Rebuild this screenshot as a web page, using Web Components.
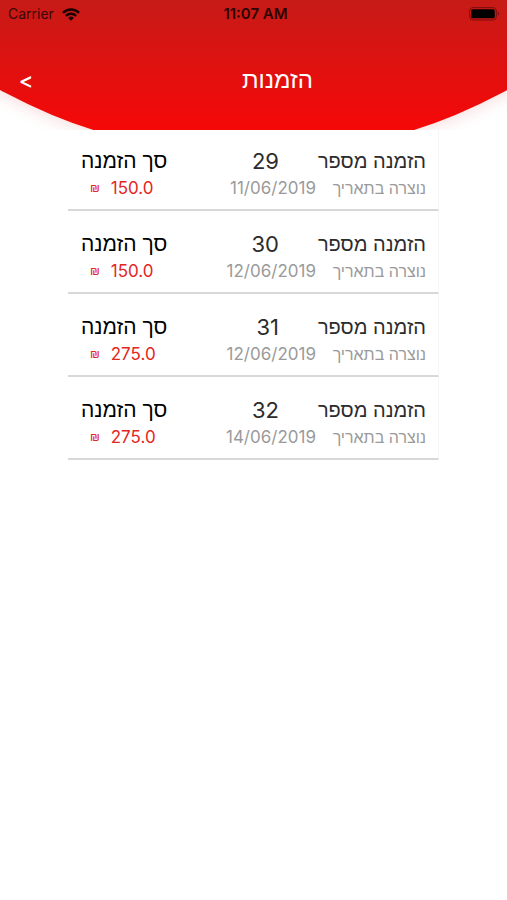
<!DOCTYPE html>
<html lang="he">
<head>
<meta charset="utf-8">
<meta name="viewport" content="width=device-width, initial-scale=1">
<title>הזמנות</title>
<style>
  body { margin: 0; background: #fff; font-family: Inter, "Liberation Sans", sans-serif; }
</style>
</head>
<body>
<orders-page></orders-page>

<template id="status-bar-template">
  <style>
    :host { display: grid; grid-template-columns: 1fr auto 1fr; align-items: center; height: 28px; padding: 0 8px; color: #3a0605; font-size: 14px; line-height: 20px; }
    .carrier { display: flex; align-items: center; gap: 8px; }
    .time { padding-left: 4px; font-size: 15px; font-weight: 600; color: #2c0403; }
    .battery { justify-self: end; display: flex; }
    svg { display: block; }
  </style>
  <span class="carrier"><span><slot name="carrier"></slot></span>
    <svg width="18" height="13" viewBox="0 0 18 13" aria-hidden="true">
      <g fill="none" stroke="#180202" stroke-width="2.4">
        <path d="M1 4.8a11.5 11.5 0 0 1 16 0"/>
        <path d="M3.9 7.9a7.3 7.3 0 0 1 10.2 0"/>
      </g>
      <path fill="#180202" d="M9 12.7 6.2 9.9a4 4 0 0 1 5.6 0z"/>
    </svg>
  </span>
  <span class="time"><slot name="time"></slot></span>
  <span class="battery">
    <svg width="30" height="14" viewBox="0 0 30 14" aria-hidden="true">
      <rect x=".6" y=".6" width="26.8" height="12.4" rx="3.4" fill="none" stroke="#7c0f0c" stroke-width="1"/>
      <rect x="2.2" y="2.3" width="23.6" height="9" rx="1.6" fill="#000"/>
      <path d="M28.8 4.8c1.5.6 1.5 3.4 0 4z" fill="#7c0f0c"/>
    </svg>
  </span>
</template>

<template id="page-header-template">
  <style>
    :host { display: block; position: relative; overflow: hidden; height: 130px; }
    .dome { position: absolute; left: 50%; bottom: -25px; width: 208vw; aspect-ratio: 1; transform: translateX(-50%); border-radius: 50%; background: linear-gradient(to top, #f60808 25px, #c61b17 155px); box-shadow: 0 0 18px rgba(200, 30, 30, .2); }
    .content { position: relative; }
    nav { display: grid; grid-template-columns: 48px 1fr; align-items: center; height: 52px; margin-top: 26px; }
    button { all: unset; height: 48px; padding-left: 4px; text-align: center; color: #fff; font-size: 22px; font-weight: 500; line-height: 44px; cursor: pointer; }
    h1 { margin: 0; text-align: center; color: #fff; font-size: 24px; line-height: 28px; font-weight: 400; }
  </style>
  <div class="dome"></div>
  <div class="content">
    <slot name="status"></slot>
    <nav><button type="button" aria-label="חזרה">&lt;</button><h1><slot></slot></h1></nav>
  </div>
</template>

<template id="order-row-template">
  <style>
    :host { display: flex; justify-content: space-between; direction: rtl; padding: 20px 12px 7px 13px; border-bottom: 2px solid #d8d8d8; border-right: 1px solid #f6f6f6; white-space: nowrap; }
    .order { display: grid; grid-template-columns: auto auto; column-gap: 2px; }
    .main { font-size: 20px; line-height: 26px; color: #2c2c2c; }
    .sub { font-size: 16px; line-height: 28px; color: #9a9a9a; }
    .number { font-size: 22px; padding-inline-start: 37px; }
    .date, .amount { font-size: 17px; }
    .total { display: flex; flex-direction: column; }
    .total .main { font-size: 21px; color: #000; }
    .total .price { display: flex; flex-direction: row-reverse; justify-content: flex-end; direction: ltr; gap: 11px; padding-left: 9px; color: #e4261f; }
    .total .price { flex-direction: row; justify-content: flex-start; }
    .currency { font-size: 12px; }
  </style>
  <div class="order">
    <span class="main">הזמנה מספר</span><span class="main number"></span>
    <span class="sub">נוצרה בתאריך</span><span class="sub date"></span>
  </div>
  <div class="total">
    <span class="main">סך הזמנה</span>
    <span class="sub price"><span class="currency">₪</span><span class="amount"></span></span>
  </div>
</template>

<template id="orders-page-template">
  <style>
    :host { display: block; min-height: 100vh; background: #fff; }
    main { position: relative; width: 73.2%; margin: -2px auto 0; }
  </style>
  <page-header>
    <status-bar slot="status"><span slot="carrier">Carrier</span><span slot="time">11:07 AM</span></status-bar>
    הזמנות
  </page-header>
  <main role="list">
    <order-row role="listitem" number="29" date="11/06/2019" total="150.0"></order-row>
    <order-row role="listitem" number="30" date="12/06/2019" total="150.0"></order-row>
    <order-row role="listitem" number="31" date="12/06/2019" total="275.0"></order-row>
    <order-row role="listitem" number="32" date="14/06/2019" total="275.0"></order-row>
  </main>
</template>

<script>
  class TemplateElement extends HTMLElement {
    constructor() {
      super();
      const template = document.getElementById(this.localName + '-template');
      this.attachShadow({ mode: 'open' }).append(template.content.cloneNode(true));
    }
  }
  class StatusBar extends TemplateElement {}
  class PageHeader extends TemplateElement {}
  class OrdersPage extends TemplateElement {}
  class OrderRow extends TemplateElement {
    connectedCallback() {
      const fill = (selector, name) => {
        this.shadowRoot.querySelector(selector).textContent = this.getAttribute(name);
      };
      fill('.number', 'number');
      fill('.date', 'date');
      fill('.amount', 'total');
    }
  }
  customElements.define('status-bar', StatusBar);
  customElements.define('page-header', PageHeader);
  customElements.define('order-row', OrderRow);
  customElements.define('orders-page', OrdersPage);
</script>
</body>
</html>
